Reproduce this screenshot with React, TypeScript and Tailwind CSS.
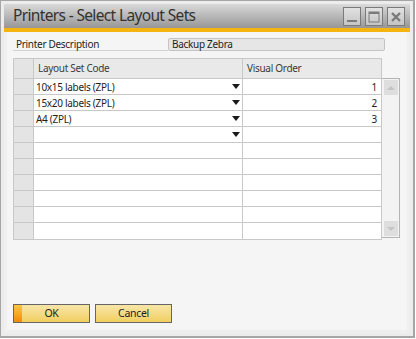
import React from "react";

const rows = [
  { code: "10x15 labels (ZPL)", order: "1", arrow: true },
  { code: "15x20 labels (ZPL)", order: "2", arrow: true },
  { code: "A4 (ZPL)", order: "3", arrow: true },
  { code: "", order: "", arrow: true },
  { code: "", order: "", arrow: false },
  { code: "", order: "", arrow: false },
  { code: "", order: "", arrow: false },
  { code: "", order: "", arrow: false },
  { code: "", order: "", arrow: false },
  { code: "", order: "", arrow: false },
];

function Arrow() {
  return (
    <svg width="8" height="5" viewBox="0 0 8 5" className="shrink-0">
      <path d="M0 0 H8 L4 5 Z" fill="#1a1a1a" />
    </svg>
  );
}

function WinBtn({ kind }: { kind: "min" | "max" | "close" }) {
  return (
    <div className="w-[18px] h-[19px] border border-[#7a7a7a] bg-gradient-to-b from-[#e2e2e2] to-[#c4c4c4] flex items-center justify-center">
      {kind === "min" && (
        <svg width="12" height="12" viewBox="0 0 12 12">
          <rect x="1" y="9" width="10" height="2" fill="#7a7a7a" />
        </svg>
      )}
      {kind === "max" && (
        <svg width="12" height="12" viewBox="0 0 12 12">
          <rect x="1" y="1" width="10" height="10" fill="none" stroke="#7a7a7a" strokeWidth="1" />
          <rect x="1" y="1" width="10" height="2" fill="#7a7a7a" />
        </svg>
      )}
      {kind === "close" && (
        <svg width="12" height="12" viewBox="0 0 12 12">
          <path d="M2 2 L10 10 M10 2 L2 10" stroke="#7a7a7a" strokeWidth="2.4" />
        </svg>
      )}
    </div>
  );
}

export default function App() {
  return (
    <div className="w-[416px] h-[339px] bg-white" style={{ fontFamily: '"Noto Sans", "Open Sans", sans-serif' }}>
      <div className="w-[415px] h-[338px] border-l border-t border-r-2 border-b-2 border-[#a6a6a6] bg-[#ececec] px-[3px] pt-[3px] pb-[3px] flex flex-col">
        {/* title bar */}
        <div className="h-[24px] bg-gradient-to-b from-[#dadada] to-[#979797] flex items-center pl-[9px] pr-[5px]">
          <div className="text-[15.5px] leading-none text-[#333333] tracking-[-0.65px]">Printers - Select Layout Sets</div>
          <div className="ml-auto flex gap-[4px] items-center mt-[1px]">
            <WinBtn kind="min" />
            <WinBtn kind="max" />
            <WinBtn kind="close" />
          </div>
        </div>
        <div className="h-[4px] bg-[#f5b411]" />
        {/* content */}
        <div className="flex-1 bg-[#f5f5f5] border-l-[3px] border-r-[3px] border-b-[3px] border-[#efefef] flex flex-col pl-[6px] pt-[6px] text-[10px] tracking-[-0.3px] text-[#1e1e1e]">
          <div className="flex items-stretch h-[13px]">
            <div className="w-[155px] border-b border-[#d2d2d2] pl-[3px] leading-[12px]">Printer Description</div>
            <div className="w-[217px] bg-[#e6e6e6] border border-[#c4c4c4] rounded-[2px] pl-[3px] leading-[11px]">Backup Zebra</div>
          </div>
          {/* grid */}
          <div className="mt-[7px] flex">
            <div className="w-[369px] border border-[#c8c8c8] flex flex-col">
              <div className="flex h-[20px] bg-[#e9e9e9] border-b border-[#c8c8c8]">
                <div className="w-[20px] border-r border-[#c8c8c8] bg-[#e4e4e4]" />
                <div className="w-[209px] border-r border-[#c8c8c8] pl-[4px] flex items-center text-[#3a3a3a]">Layout Set Code</div>
                <div className="flex-1 pl-[4px] flex items-center text-[#3a3a3a]">Visual Order</div>
              </div>
              {rows.map((r, i) => (
                <div key={i} className={`flex h-[16px] bg-white ${i < rows.length - 1 ? "border-b" : ""} border-[#c8c8c8]`}>
                  <div className="w-[20px] border-r border-[#c8c8c8] bg-[#e4e4e4]" />
                  <div className="w-[209px] border-r border-[#c8c8c8] pl-[2px] pr-[2px] flex items-center">
                    <span className="flex-1 leading-none">{r.code}</span>
                    {r.arrow && <Arrow />}
                  </div>
                  <div className="flex-1 pr-[4px] flex items-center justify-end leading-none">{r.order}</div>
                </div>
              ))}
            </div>
            {/* scrollbar */}
            <div className="mt-[20px] w-[18px] h-[160px] border-t border-r border-b border-[#b4b4b4] bg-[#f3f3f3] flex flex-col justify-between p-[1px] pl-[2px]">
              <div className="h-[15px] w-[14px] bg-[#dedede] flex items-center justify-center">
                <svg width="8" height="4" viewBox="0 0 8 4"><path d="M0 4 H8 L4 0 Z" fill="#c4c4c4" /></svg>
              </div>
              <div className="h-[15px] w-[14px] bg-[#dedede] flex items-center justify-center">
                <svg width="8" height="4" viewBox="0 0 8 4"><path d="M0 0 H8 L4 4 Z" fill="#c4c4c4" /></svg>
              </div>
            </div>
          </div>
          <div className="flex-1" />
          {/* buttons */}
          <div className="flex gap-[5px] mb-[7px]">
            <div className="relative w-[77px] h-[19px] border border-[#666] bg-gradient-to-b from-[#f8e6a8] to-[#f1cf5e] flex items-center justify-center">
              <div className="absolute left-0 top-0 bottom-0 w-[8px] bg-gradient-to-b from-[#f8c83a] to-[#ef8a0a]" />
              <span className="leading-none text-[10.5px]">OK</span>
            </div>
            <div className="w-[77px] h-[19px] border border-[#666] bg-gradient-to-b from-[#f8e6a8] to-[#f1cf5e] flex items-center justify-center">
              <span className="leading-none text-[10.5px]">Cancel</span>
            </div>
          </div>
        </div>
      </div>
    </div>
  );
}
